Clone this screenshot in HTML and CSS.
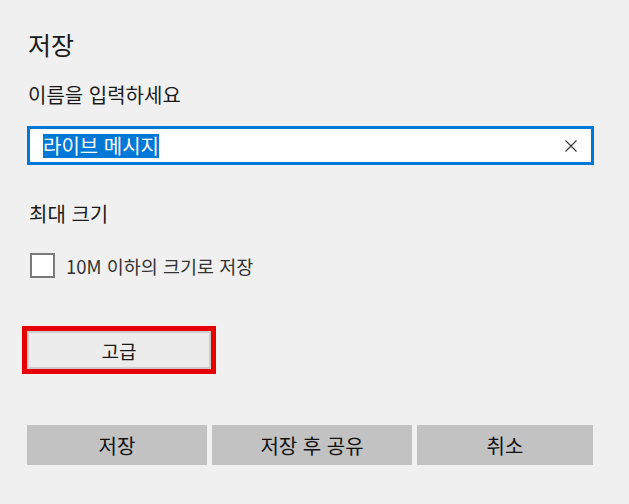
FILE: index.html
```html
<!DOCTYPE html>
<html lang="ko">
<head>
<meta charset="utf-8">
<link rel="stylesheet" href="styles.css">
</head>
<body>
<div class="page">
  <h1 class="title">저장</h1>
  <div class="label">이름을 입력하세요</div>
  <div class="input">
    <span class="sel">라이브 메시지</span>
    <svg class="clear" width="12" height="12" viewBox="0 0 12 12"><path d="M0.5 0.5 L11.5 11.5 M11.5 0.5 L0.5 11.5" stroke="#333" stroke-width="1.1" fill="none"/></svg>
  </div>
  <div class="section">최대 크기</div>
  <label class="check-row"><span class="box"></span><span class="check-text">10M 이하의 크기로 저장</span></label>
  <button class="adv">고급</button>
  <div class="actions">
    <button class="act a1">저장</button>
    <button class="act a2">저장 후 공유</button>
    <button class="act a3">취소</button>
  </div>
</div>
</body>
</html>
```
FILE: styles.css
```css
html, body {
  margin: 0;
  padding: 0;
  background: #f0f0f0;
}
body {
  font-family: "Noto Sans CJK KR", "Noto Sans", sans-serif;
  color: #1a1a1a;
  width: 629px;
  height: 504px;
  overflow: hidden;
}
.page {
  padding: 28px 0 0 27px;
  display: flex;
  flex-direction: column;
  align-items: flex-start;
}
.title {
  margin: 0;
  font-size: 25px;
  font-weight: 400;
  line-height: 32px;
  padding-left: 1px;
}
.label {
  margin-top: 23px;
  font-size: 20px;
  line-height: 24px;
  padding-left: 1px;
}
.input {
  margin-top: 19px;
  box-sizing: border-box;
  width: 567px;
  height: 39px;
  border: 3px solid #0078d7;
  background: #fff;
  display: flex;
  align-items: center;
  padding: 0 14px 0 13px;
}
.sel {
  background: #0078d7;
  color: #fff;
  font-size: 20px;
  line-height: 24px;
  flex: none;
}
.clear {
  margin-left: auto;
}
.section {
  margin-top: 37px;
  font-size: 20px;
  line-height: 24px;
  padding-left: 2px;
}
.check-row {
  margin-top: 27px;
  display: flex;
  align-items: center;
  height: 25px;
}
.box {
  box-sizing: border-box;
  width: 25px;
  height: 25px;
  margin-left: 3px;
  border: 2px solid #7a7a7a;
  background: #fff;
}
.check-text {
  margin-left: 11px;
  font-size: 18.5px;
  line-height: 24px;
  color: #333;
}
.adv {
  margin-top: 53px;
  box-sizing: border-box;
  width: 184px;
  height: 38px;
  border: 2px solid #cccccc;
  background: #ececec;
  outline: 5px solid #e60000;
  font-family: inherit;
  font-size: 19px;
  color: #1a1a1a;
  padding: 0;
}
.actions {
  margin-top: 56px;
  display: flex;
  gap: 5px;
}
.act {
  height: 40px;
  border: none;
  background: #c2c2c2;
  font-family: inherit;
  font-size: 20px;
  color: #111;
  padding: 0;
}
.a1 { width: 180px; }
.a2 { width: 200px; }
.a3 { width: 176px; }
```
